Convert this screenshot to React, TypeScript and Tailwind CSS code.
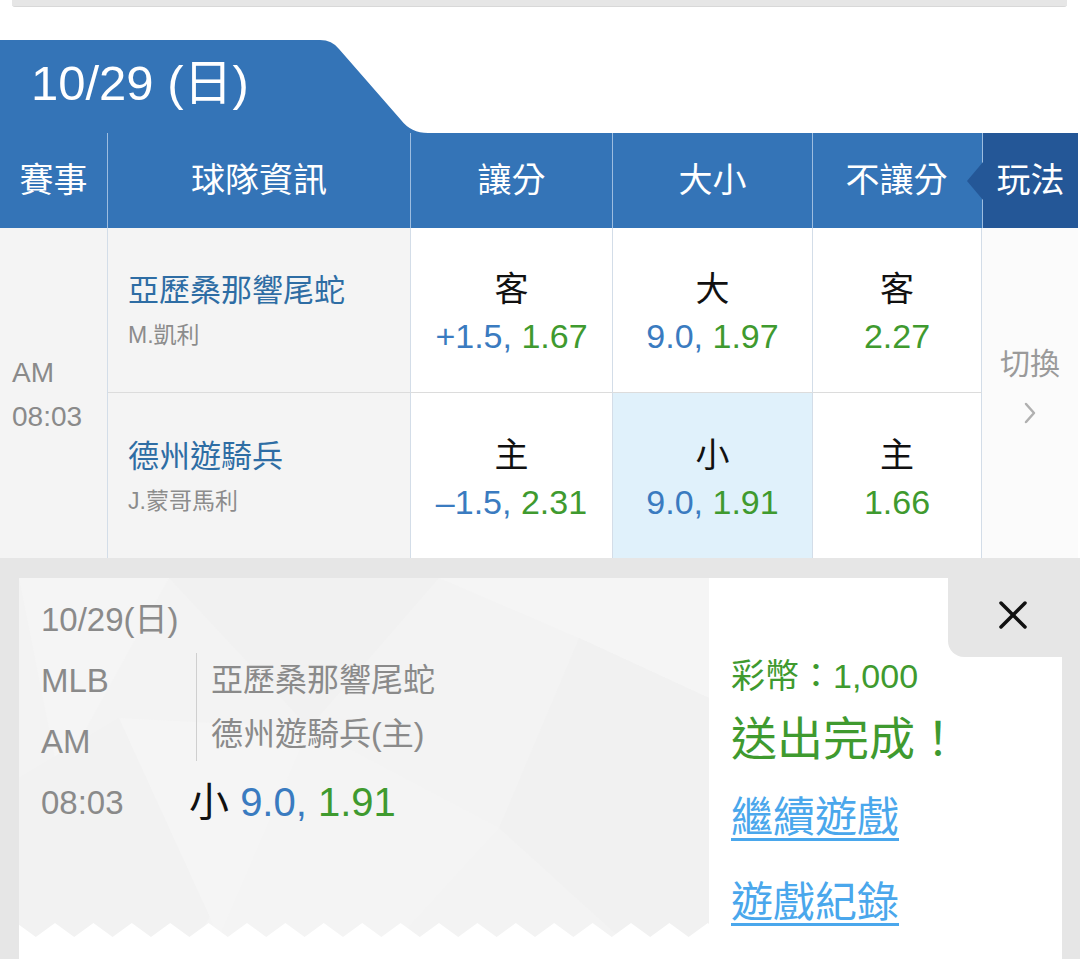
import React from "react";

const FONT = "font-['Liberation_Sans','Noto_Sans_CJK_TC',sans-serif]";

function OddsCell({
  label,
  line,
  price,
  highlight,
  bottom,
}: {
  label: string;
  line?: string;
  price: string;
  highlight?: boolean;
  bottom?: boolean;
}) {
  return (
    <div
      className={
        "flex flex-col items-center justify-center pt-[6px] border-r border-[#d3dde8] " +
        (highlight ? "bg-[#e0f1fb] " : "bg-white ") +
        (bottom ? "border-b border-b-[#dcdcdc]" : "")
      }
    >
      <div className="text-[34px] leading-[47px] text-[#111]">{label}</div>
      <div className="text-[34px] leading-[47px] whitespace-nowrap">
        {line && <span className="text-[#3a7bc0]">{line} </span>}
        <span className="text-[#3f9a2f]">{price}</span>
      </div>
    </div>
  );
}

function TeamCell({ name, pitcher, bottom }: { name: string; pitcher: string; bottom?: boolean }) {
  return (
    <div
      className={
        "flex flex-col justify-center pl-[20px] pt-[6px] bg-[#f4f4f4] border-r border-[#d3dde8] " +
        (bottom ? "border-b border-b-[#dcdcdc]" : "")
      }
    >
      <div className="text-[31px] leading-[44px] text-[#2e6da4]">{name}</div>
      <div className="text-[23px] leading-[44px] text-[#8c8c8c]">{pitcher}</div>
    </div>
  );
}

function Zigzag() {
  const w = 690;
  const pitch = 38.4;
  const start = 16.8 - pitch;
  const pts: string[] = [`0,14`];
  for (let x = start; x < w + pitch; x += pitch) {
    pts.push(`${x},14`, `${x + pitch / 2},0`, `${x + pitch},14`);
  }
  pts.push(`${w},14`);
  return (
    <svg width={w} height={14} viewBox={`0 0 ${w} 14`} className="block">
      <polygon points={pts.join(" ")} fill="#ffffff" />
    </svg>
  );
}

function PatternBg() {
  return (
    <svg width="690" height="359" viewBox="0 0 690 359" className="absolute inset-0">
      <rect width="690" height="359" fill="#f3f3f3" />
      <polygon points="0,0 150,0 40,200" fill="#f5f5f5" />
      <polygon points="150,0 420,0 290,150" fill="#f1f1f1" />
      <polygon points="420,0 690,0 690,120 560,60" fill="#f5f5f5" />
      <polygon points="0,200 100,140 200,359 0,359" fill="#f2f2f2" />
      <polygon points="290,150 480,250 380,359 180,359" fill="#f4f4f4" />
      <polygon points="560,60 690,120 690,359 600,359 480,250" fill="#f1f1f1" />
      <polygon points="100,140 290,150 200,359" fill="#f5f5f5" />
    </svg>
  );
}

export default function App() {
  return (
    <div className={"w-[1080px] h-[959px] overflow-hidden bg-white flex flex-col " + FONT}>
      {/* top bar remnant */}
      <div className="px-[12px] pr-[13px]">
        <div className="h-[7px] bg-[#e6e6e6] border-b border-[#d8d8d8] rounded-b-[3px]" />
      </div>

      {/* date tab */}
      <div className="mt-[33px] flex">
        <div className="w-[318px] h-[93px] bg-[#3474b7] flex items-center pl-[31px] pb-[6px]">
          <span className="text-[49px] text-white leading-none whitespace-nowrap">10/29 (日)</span>
        </div>
        <svg width="112" height="93" viewBox="0 0 112 93" className="block">
          <path d="M0,0 L2,0 Q14,0 21,9 L83,80 Q93,93 110,93 L0,93 Z" fill="#3474b7" />
        </svg>
      </div>

      {/* table */}
      <div className="w-[1078px]">
        <div className="grid grid-cols-[108px_303px_202px_200px_169px_96px] h-[95px] bg-[#3474b7] text-white text-[34px]">
          <div className="flex items-center justify-center border-r border-[#9dbde0]">賽事</div>
          <div className="flex items-center justify-center border-r border-[#9dbde0]">球隊資訊</div>
          <div className="flex items-center justify-center border-r border-[#9dbde0]">讓分</div>
          <div className="flex items-center justify-center border-r border-[#9dbde0]">大小</div>
          <div className="flex items-center justify-center pr-[2px]">不讓分</div>
          <div className="relative flex items-center justify-center bg-[#245797] border-l border-[#9dbde0]">
            <svg width="16" height="38" viewBox="0 0 16 38" className="absolute left-[-16px] top-[29px]">
              <polygon points="16,0 0,19 16,38" fill="#245797" />
            </svg>
            玩法
          </div>
        </div>

        <div className="grid grid-cols-[108px_303px_202px_200px_169px_96px] grid-rows-[165px_165px]">
          <div className="row-span-2 flex flex-col justify-center pl-[12px] pt-[4px] bg-[#f4f4f4] border-r border-[#d3dde8] text-[28px] leading-[44px] text-[#8a8a8a]">
            <div>AM</div>
            <div>08:03</div>
          </div>
          <TeamCell name="亞歷桑那響尾蛇" pitcher="M.凱利" bottom />
          <OddsCell label="客" line="+1.5," price="1.67" bottom />
          <OddsCell label="大" line="9.0," price="1.97" bottom />
          <OddsCell label="客" price="2.27" bottom />
          <div className="row-span-2 flex flex-col items-center justify-center bg-[#fbfbfb] pb-[16px]">
            <div className="text-[30px] leading-[36px] text-[#9a9a9a]">切換</div>
            <svg width="14" height="22" viewBox="0 0 14 22" className="mt-[20px]">
              <polyline points="3,2 11,11 3,20" fill="none" stroke="#b0b0b0" strokeWidth="2.5" strokeLinecap="round" strokeLinejoin="round" />
            </svg>
          </div>
          <TeamCell name="德州遊騎兵" pitcher="J.蒙哥馬利" />
          <OddsCell label="主" line="–1.5," price="2.31" />
          <OddsCell label="小" line="9.0," price="1.91" highlight />
          <OddsCell label="主" price="1.66" />
        </div>
      </div>

      {/* bottom result card */}
      <div className="flex-1 bg-[#e6e6e6] pt-[20px] pl-[19px] pr-[18px]">
        <div className="flex h-full bg-white">
          {/* left ticket */}
          <div className="w-[690px] flex flex-col">
            <div className="relative h-[359px]">
              <PatternBg />
              <div className="relative pl-[22px] pt-[11px] text-[33px] text-[#8a8a8a]">
                <div className="leading-[61px]">10/29(日)</div>
                <div className="flex items-start">
                  <div className="w-[155px]">
                    <div className="leading-[61px]">MLB</div>
                    <div className="leading-[61px]">AM</div>
                  </div>
                  <div className="mt-[3px] h-[108px] border-l border-[#cfcfcf] pl-[14px] text-[32px]">
                    <div className="leading-[54px] whitespace-nowrap">亞歷桑那響尾蛇</div>
                    <div className="leading-[54px] whitespace-nowrap">德州遊騎兵(主)</div>
                  </div>
                </div>
                <div className="flex items-center">
                  <div className="w-[148px] leading-[61px]">08:03</div>
                  <div className="text-[40px] leading-[61px] whitespace-nowrap">
                    <span className="text-[#111]">小</span>{" "}
                    <span className="text-[#3a7bc0]">9.0,</span>{" "}
                    <span className="text-[#3f9a2f]">1.91</span>
                  </div>
                </div>
              </div>
              <div className="absolute left-0 bottom-0">
                <Zigzag />
              </div>
            </div>
          </div>

          {/* right panel */}
          <div className="flex-1 flex flex-col bg-white">
            <div className="flex justify-end">
              <div className="w-[114px] h-[79px] bg-[#e6e6e6] rounded-bl-[16px] flex items-center justify-center pl-[16px] pb-[5px]">
                <svg width="30" height="30" viewBox="0 0 30 30">
                  <line x1="3" y1="3" x2="27" y2="27" stroke="#111" strokeWidth="3.5" strokeLinecap="round" />
                  <line x1="27" y1="3" x2="3" y2="27" stroke="#111" strokeWidth="3.5" strokeLinecap="round" />
                </svg>
              </div>
            </div>
            <div className="pl-[22px] flex flex-col items-start">
              <div className="text-[34px] leading-[38px] text-[#3f9a2f] whitespace-nowrap">彩幣：1,000</div>
              <div className="mt-[14px] text-[46px] leading-[60px] text-[#3f9a2f] whitespace-nowrap">送出完成！</div>
              <a className="mt-[19px] text-[42px] leading-[60px] text-[#4aa7ec] underline underline-offset-[6px] decoration-[3px] whitespace-nowrap">繼續遊戲</a>
              <a className="mt-[25px] text-[42px] leading-[60px] text-[#4aa7ec] underline underline-offset-[6px] decoration-[3px] whitespace-nowrap">遊戲紀錄</a>
            </div>
          </div>
        </div>
      </div>
    </div>
  );
}
